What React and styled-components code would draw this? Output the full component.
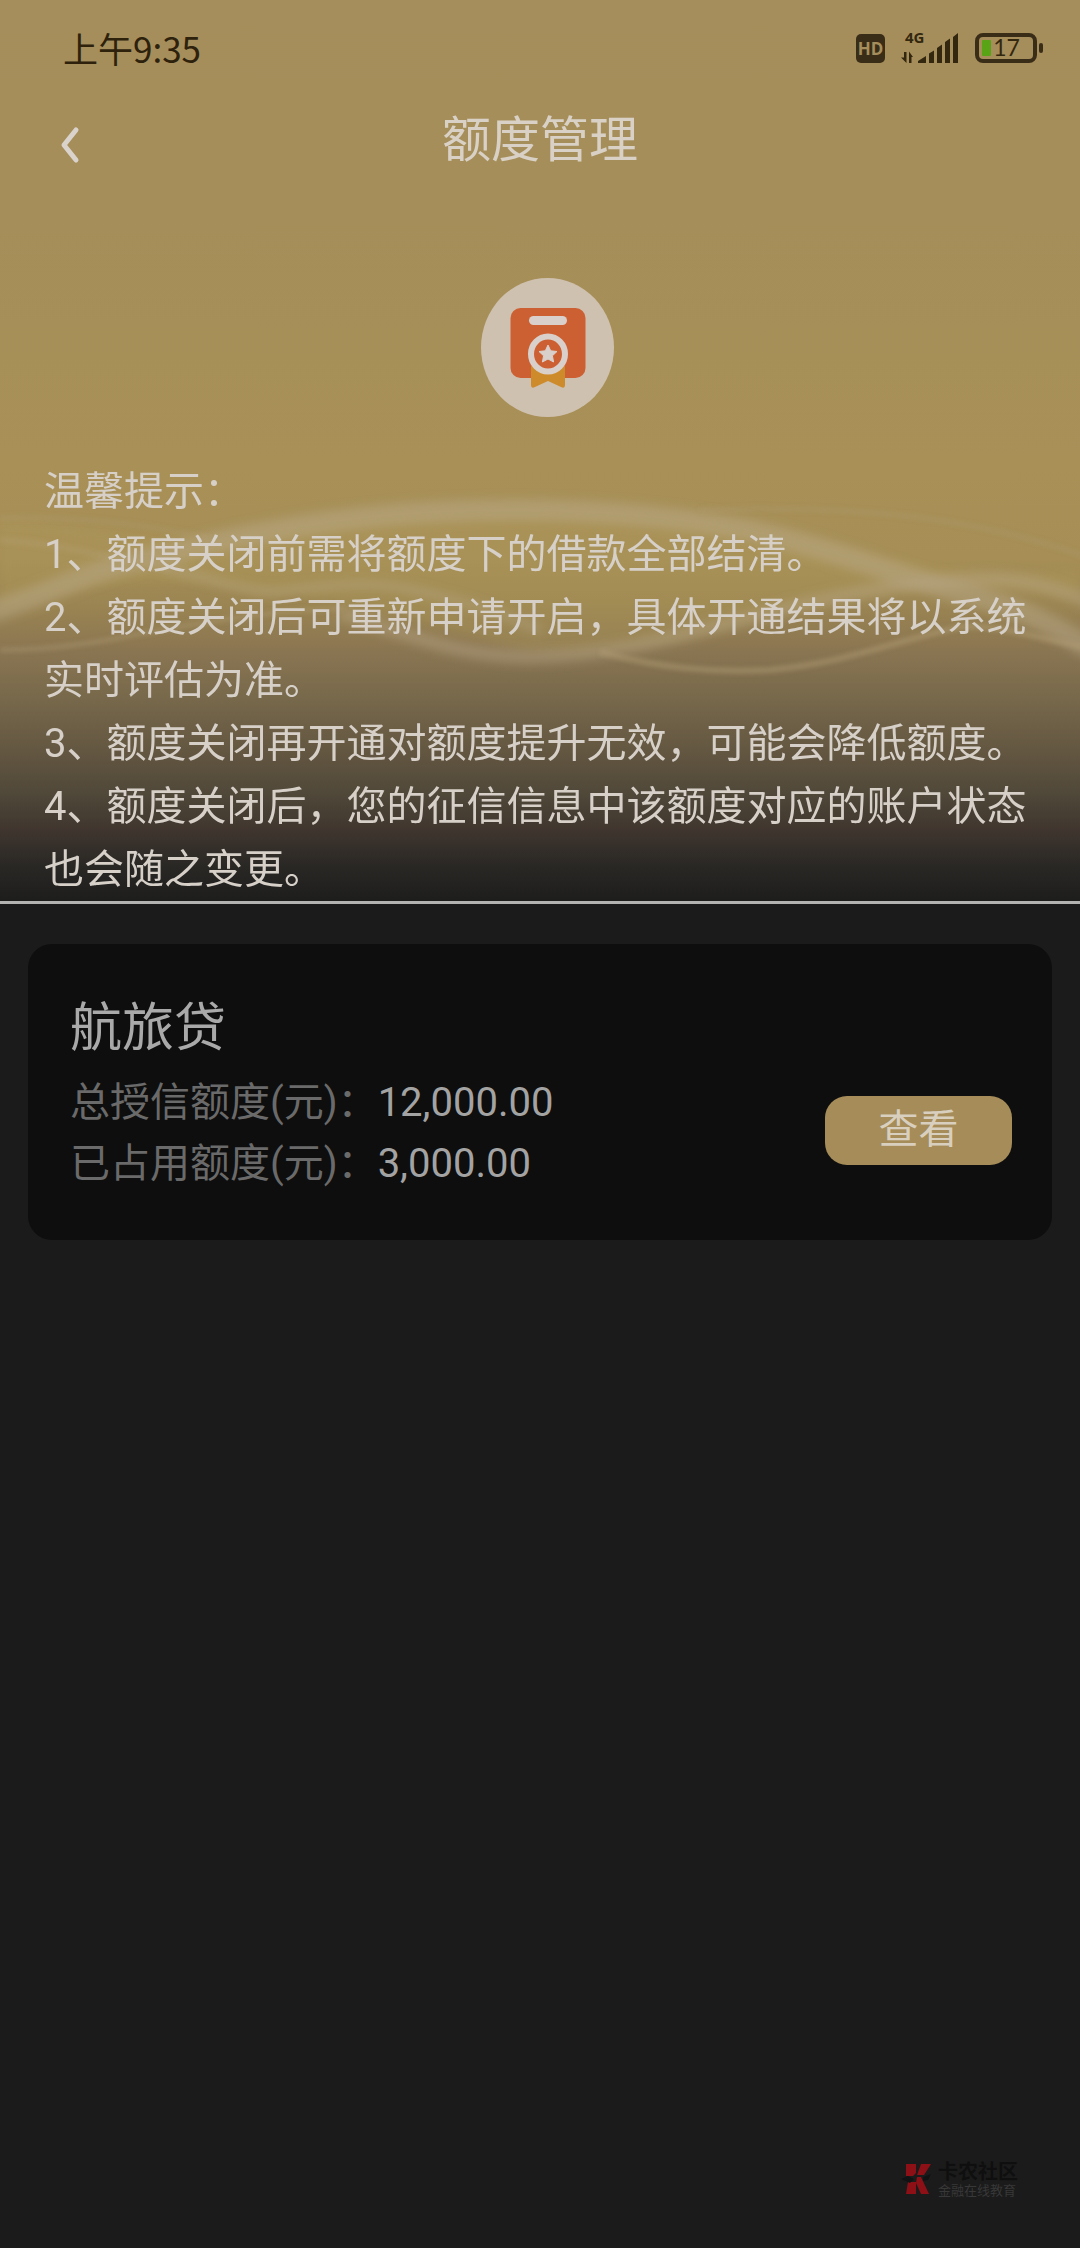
import React from "react";
import styled, { createGlobalStyle } from "styled-components";

const GlobalStyle = createGlobalStyle`
  *, *::before, *::after { box-sizing: border-box; }
  body {
    margin: 0;
    background: #1b1b1b;
    font-family: Roboto, "Noto Sans CJK SC", sans-serif;
    font-size: 40px;
  }
  h1, h2, p, ol, dl, dd { margin: 0; padding: 0; font-weight: 400; }
`;

const Page = styled.div`
  display: flex;
  flex-direction: column;
  min-height: 100vh;
`;

const Hero = styled.header`
  background: linear-gradient(
    #a58e5b 0%, #a68e5a 24%, #a89057 52%, #a68e56 62%, #9b8552 67%,
    #8b7652 72%, #796a4c 77%, #655842 83%, #504839 88%, #40362f 92%, #2a2825 96%, #1d1d1c 100%
  );
  border-bottom: 3px solid #b3b3b1;
`;

const StatusBar = styled.div`
  display: flex;
  align-items: center;
  justify-content: space-between;
  height: 96px;
  padding: 0 36px 0 63px;
  color: #2e220c;
`;

const Clock = styled.time`
  font-family: "Noto Sans CJK SC", sans-serif;
  font-size: 35px;
  line-height: 48px;
`;

const StatusIcons = styled.div`
  display: flex;
  align-items: center;
  gap: 16px;
  font-family: "Open Sans", sans-serif;
`;

const NavBar = styled.nav`
  display: grid;
  grid-template-columns: 96px 1fr 96px;
  align-items: center;
  height: 90px;
`;

const BackButton = styled.button`
  display: flex;
  justify-content: center;
  margin-top: 8px;
  padding: 0 0 0 44px;
  border: 0;
  background: none;
  color: #d9d3cc;
`;

const PageTitle = styled.h1`
  color: #d9d1c6;
  font-size: 49px;
  line-height: 64px;
  text-align: center;
`;

const Emblem = styled.div`
  display: flex;
  justify-content: center;
  padding: 92px 30px 43px 44px;
`;

const TipsArea = styled.section`
  display: grid;
  grid-template-columns: minmax(0, 1fr);
  & > * { grid-area: 1 / 1; }
`;

const Waves = styled.svg`
  display: block;
  width: 100%;
  height: 100%;
  min-height: 0;
`;

const Tips = styled.div`
  z-index: 1;
  padding: 0 30px 0 44px;
  color: #d6d0c9;
  line-height: 63px;
`;

const Main = styled.main`
  padding: 40px 28px;
`;

const Card = styled.article`
  display: flex;
  justify-content: space-between;
  align-items: flex-end;
  padding: 46px 40px 46px 42px;
  border-radius: 24px;
  background: #0e0e0e;
`;

const CardTitle = styled.h2`
  color: #a9a9a9;
  font-size: 52px;
  line-height: 78px;
  margin-bottom: 4px;
`;

const Amount = styled.div`
  display: flex;
  line-height: 61px;
`;

const AmountLabel = styled.dt`
  color: #6a6a6a;
`;

const AmountValue = styled.dd`
  color: #a3a3a3;
`;

const ViewButton = styled.button`
  width: 187px;
  height: 69px;
  margin-bottom: 29px;
  padding: 0 0 2px;
  border: 0;
  border-radius: 22px;
  background: #a58c59;
  color: #d9cfbf;
  font-family: inherit;
  font-size: 40px;
  line-height: 60px;
`;

const Brand = styled.footer`
  display: flex;
  align-items: center;
  justify-content: flex-end;
  gap: 4px;
  margin-top: auto;
  padding: 0 62px 51px 0;
`;

const BrandText = styled.div`
  font-family: "Noto Sans CJK SC", sans-serif;
`;

const BrandName = styled.p`
  color: #0f0f0f;
  font-size: 20px;
  font-weight: 700;
  line-height: 22px;
`;

const BrandLine = styled.p`
  color: #383838;
  font-size: 13px;
  line-height: 15px;
`;

const tips = [
  "温馨提示：",
  "1、额度关闭前需将额度下的借款全部结清。",
  "2、额度关闭后可重新申请开启，具体开通结果将以系统实时评估为准。",
  "3、额度关闭再开通对额度提升无效，可能会降低额度。",
  "4、额度关闭后，您的征信信息中该额度对应的账户状态也会随之变更。",
];

const amounts = [
  { label: "总授信额度(元)：", value: "12,000.00" },
  { label: "已占用额度(元)：", value: "3,000.00" },
];

function HdIcon() {
  return (
    <svg width="29" height="29" viewBox="0 0 29 29" aria-label="HD">
      <rect width="29" height="29" rx="5" fill="#3a2d18" />
      <text x="14.5" y="20.500" textAnchor="middle" fontSize="17" fontWeight="700" fill="#a58e5b">HD</text>
    </svg>
  );
}

function SignalIcon() {
  return (
    <svg width="58" height="40" viewBox="0 -4 58 40" fill="#33270f">
      <text x="4" y="11" fontSize="15" fontWeight="700">4G</text>
      <path d="M3 20h2.500v11L0 25.500h3zM8 31V19.500l4 5.500h-1.500v6z" />
      <path d="M17 31v-2l8-5v7zM28 31V21.500l5-3V31zM36 31V16l5-3.500V31zM44 31V10l5-3.500V31zM52 31V5l5-4v30z" />
    </svg>
  );
}

function BatteryIcon() {
  return (
    <svg width="69" height="30" viewBox="0 0 69 30">
      <rect x="2" y="2" width="58" height="26" rx="6" fill="none" stroke="#3a2d18" strokeWidth="4" />
      <rect x="64" y="10" width="4" height="10" rx="2" fill="#3a2d18" />
      <rect x="7" y="7" width="9" height="16" rx="1" fill="#58a416" />
      <text x="31.500" y="23" textAnchor="middle" fontFamily="Lato, sans-serif" fontSize="23" fill="#33270f">17</text>
    </svg>
  );
}

function EmblemIcon() {
  return (
    <svg width="133" height="139" viewBox="0 0 133 139" aria-hidden="true">
      <ellipse cx="66.500" cy="69.500" rx="66.500" ry="69.500" fill="#cfc1b0" />
      <rect x="29.500" y="30" width="75" height="70" rx="10" fill="#cd6033" />
      <rect x="48" y="38" width="38" height="9" rx="4.500" fill="#dad0cb" />
      <path d="M50 88h34v19q0 4-4 2l-13-6-13 6q-4 2-4-2z" fill="#ce8b2c" />
      <ellipse cx="67" cy="76" rx="17" ry="17.500" fill="#cd6033" stroke="#dad0cb" strokeWidth="6" />
      <path
        d="M67 67l2.700 5.800 6.300.7-4.600 4.300 1.200 6.200-5.600-3-5.600 3 1.200-6.200-4.600-4.300 6.300-.7z"
        fill="#dad0cb" stroke="#dad0cb" strokeWidth="1" strokeLinejoin="round"
      />
    </svg>
  );
}

function WaveBackdrop() {
  return (
    <Waves viewBox="0 0 1080 441" preserveAspectRatio="none" aria-hidden="true">
      <defs>
        <filter id="soft" x="-10%" y="-40%" width="120%" height="180%">
          <feGaussianBlur stdDeviation="5" />
        </filter>
        <filter id="fine" x="-10%" y="-40%" width="120%" height="180%">
          <feGaussianBlur stdDeviation="2" />
        </filter>
      </defs>
      <path
        d="M0 60C100 60 160 90 230 76C400 38 600 40 750 66C860 85 930 125 1080 110V140C960 120 880 130 790 150C700 180 600 200 520 190C400 160 340 130 260 136C180 110 100 120 0 150z"
        fill="#b19c5a" opacity="0.3" filter="url(#soft)"
      />
      <g fill="none" stroke="#b7a888" filter="url(#soft)">
        <path d="M-10 152C50 135 90 108 160 96C220 80 300 62 400 54C520 46 640 50 747 70C840 90 900 118 988 140C1030 152 1060 170 1090 188" strokeWidth="22" opacity="0.5" />
        <path d="M340 153C400 170 450 196 530 197C620 196 690 172 781 150C860 130 930 120 988 119C1030 119 1060 130 1090 142" strokeWidth="14" opacity="0.42" />
        <path d="M160 108C200 114 235 131 275 132C330 125 370 120 413 130C460 140 500 152 540 170" strokeWidth="9" opacity="0.4" />
      </g>
      <g fill="none" stroke="#b3a078" filter="url(#fine)">
        <path d="M0 190C60 190 110 180 160 170C220 160 280 150 344 148" strokeWidth="5" opacity="0.35" />
        <path d="M600 192C660 208 712 213 770 210C850 202 890 182 960 167C1000 163 1040 180 1090 188" strokeWidth="6" opacity="0.45" />
        <path d="M700 50C800 46 900 52 960 64C1010 72 1050 84 1090 98" strokeWidth="5" opacity="0.25" />
        <path d="M0 58C60 56 130 62 210 78" strokeWidth="5" opacity="0.25" />
        <path d="M0 80C60 84 110 98 170 108" strokeWidth="7" opacity="0.3" />
      </g>
    </Waves>
  );
}

function BrandMark() {
  return (
    <svg width="34" height="34" viewBox="0 0 34 34" aria-hidden="true">
      <path d="M6 2h10v9l-3 3H6zM21 2h10l-7 11h-7zM8 20h8v12H6zM17 15h4l8 17h-8l-5-11z" fill="#8c1016" />
      <path d="M1 17l7-3 6 3-4 4zM23 15l8-3-3 6-5 1z" fill="#101213" />
    </svg>
  );
}

export default function App() {
  return (
    <Page>
      <GlobalStyle />
      <Hero>
        <StatusBar>
          <Clock>上午9:35</Clock>
          <StatusIcons>
            <HdIcon />
            <SignalIcon />
            <BatteryIcon />
          </StatusIcons>
        </StatusBar>
        <NavBar>
          <BackButton type="button" aria-label="返回">
            <svg width="20" height="38" viewBox="0 0 20 38" fill="none" stroke="currentColor" strokeWidth="5" strokeLinecap="round" strokeLinejoin="round">
              <path d="M16 4L4 19l12 15" />
            </svg>
          </BackButton>
          <PageTitle>额度管理</PageTitle>
        </NavBar>
        <Emblem>
          <EmblemIcon />
        </Emblem>
        <TipsArea>
          <WaveBackdrop />
          <Tips>
            {tips.map((tip) => (
              <p key={tip}>{tip}</p>
            ))}
          </Tips>
        </TipsArea>
      </Hero>
      <Main>
        <Card>
          <div>
            <CardTitle>航旅贷</CardTitle>
            <dl>
              {amounts.map(({ label, value }) => (
                <Amount key={label}>
                  <AmountLabel>{label}</AmountLabel>
                  <AmountValue>{value}</AmountValue>
                </Amount>
              ))}
            </dl>
          </div>
          <ViewButton type="button">查看</ViewButton>
        </Card>
      </Main>
      <Brand>
        <BrandMark />
        <BrandText>
          <BrandName>卡农社区</BrandName>
          <BrandLine>金融在线教育</BrandLine>
        </BrandText>
      </Brand>
    </Page>
  );
}
